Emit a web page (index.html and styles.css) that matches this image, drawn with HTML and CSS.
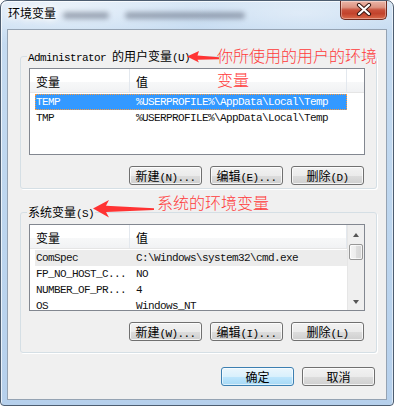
FILE: index.html
```html
<!DOCTYPE html>
<html lang="zh-CN">
<head>
<meta charset="utf-8">
<title>环境变量</title>
<link rel="stylesheet" href="styles.css">
</head>
<body>
<div class="window">
  <div class="titlebar">
    <span class="title">环境变量</span>
    <span class="blur b1"></span>
    <span class="blur b2"></span>
    <button class="close" aria-label="关闭">
      <svg width="16" height="13" viewBox="0 0 16 13">
        <path d="M3 2 L13 11 M13 2 L3 11" stroke="#3a1a14" stroke-width="4.2" stroke-linecap="round"/>
        <path d="M3 2 L13 11 M13 2 L3 11" stroke="#ffffff" stroke-width="2.2" stroke-linecap="round"/>
      </svg>
    </button>
  </div>
  <div class="client">
    <fieldset class="group g1">
      <legend><span class="m">Administrator </span>的用户变量<span class="m">(U)</span></legend>
      <div class="list">
        <div class="lmain">
          <div class="lhead"><span class="hc c1">变量</span><span class="hc c2">值</span><span class="hc c3"></span></div>
          <div class="rows m">
            <div class="row sel"><span class="n">TEMP</span><span class="v">%USERPROFILE%\AppData\Local\Temp</span></div>
            <div class="row"><span class="n">TMP</span><span class="v">%USERPROFILE%\AppData\Local\Temp</span></div>
          </div>
        </div>
      </div>
      <div class="btns">
        <button class="btn">新建<span class="m">(N)...</span></button>
        <button class="btn">编辑<span class="m">(E)...</span></button>
        <button class="btn">删除<span class="m">(D)</span></button>
      </div>
    </fieldset>

    <fieldset class="group g2">
      <legend>系统变量<span class="m">(S)</span></legend>
      <div class="list">
        <div class="lmain">
          <div class="lhead"><span class="hc c1">变量</span><span class="hc c2 last">值</span></div>
          <div class="rows m">
            <div class="row hov"><span class="n">ComSpec</span><span class="v">C:\Windows\system32\cmd.exe</span></div>
            <div class="row"><span class="n">FP_NO_HOST_C...</span><span class="v">NO</span></div>
            <div class="row"><span class="n">NUMBER_OF_PR...</span><span class="v">4</span></div>
            <div class="row"><span class="n">OS</span><span class="v">Windows_NT</span></div>
          </div>
        </div>
        <div class="sbar">
          <div class="sb-btn"><span class="tri up"></span></div>
          <div class="thumb"></div>
          <div class="track"></div>
          <div class="sb-btn"><span class="tri down"></span></div>
        </div>
      </div>
      <div class="btns">
        <button class="btn">新建<span class="m">(W)...</span></button>
        <button class="btn">编辑<span class="m">(I)...</span></button>
        <button class="btn">删除<span class="m">(L)</span></button>
      </div>
    </fieldset>

    <div class="footer">
      <button class="btn default">确定</button>
      <button class="btn">取消</button>
    </div>
  </div>

  <svg class="arrows" width="394" height="406" viewBox="0 0 394 406" aria-hidden="true">
    <polygon points="187,56.5 199,51 197.5,55.5 219,57.2 219,59.2 197.5,59.8 199,62.5" fill="#ff3333"/>
    <polygon points="93,208.5 109,200 106,205.8 154,208.2 154,210 106,212 109,217.5" fill="#ff3333"/>
  </svg>
  <div class="note n1">你所使用的用户的环境<br>变量</div>
  <div class="note n2">系统的环境变量</div>
</div>
</body>
</html>
```

FILE: styles.css
```css
* { box-sizing: border-box; }
html, body { margin: 0; padding: 0; }
body {
  width: 394px;
  height: 406px;
  overflow: hidden;
  background: #ffffff;
  font-family: "Noto Sans CJK SC", "Noto Sans CJK JP", sans-serif;
  font-size: 12px;
  color: #000;
}
.m {
  font-family: "Liberation Mono", "Noto Sans CJK SC", monospace;
  font-size: 11px;
  letter-spacing: -0.6px;
}

.window {
  position: relative;
  width: 394px;
  height: 406px;
  border: 1px solid #4d5d70;
  border-radius: 7px 7px 4px 4px;
  background:
    radial-gradient(ellipse 160px 40px at 60px 6px, rgba(255,255,255,0.55), rgba(255,255,255,0)),
    radial-gradient(ellipse 120px 30px at 300px 12px, rgba(255,255,255,0.35), rgba(255,255,255,0)),
    linear-gradient(180deg, #d3e4f5 0%, #c5dbf1 8%, #bcd5ee 60%, #b6d0ec 100%);
  box-shadow: inset 1px 1px 0 rgba(255,255,255,0.7), inset -1px 0 0 rgba(255,255,255,0.5);
  display: flex;
  flex-direction: column;
  overflow: hidden;
}

.titlebar {
  height: 28px;
  flex: none;
  display: flex;
  align-items: flex-start;
  padding: 0 6px 0 7px;
}
.title {
  margin-top: 4px;
  font-size: 12px;
  line-height: 16px;
  color: #000;
  text-shadow: 0 0 5px #ffffff, 0 0 8px #ffffff, 0 0 10px #ffffff;
}
.blur {
  height: 7px;
  margin-top: 11px;
  background: rgba(70, 80, 100, 0.45);
  border-radius: 4px;
  filter: blur(2.5px);
}
.b1 { width: 46px; margin-left: 7px; }
.b2 { width: 120px; margin-left: 16px; }

.close {
  margin-left: auto;
  width: 47px;
  height: 19px;
  padding: 0;
  border: 1px solid #6e2a1f;
  border-top: none;
  border-radius: 0 0 5px 5px;
  background: linear-gradient(180deg, #ecb5a7 0%, #dd9482 35%, #c9503a 50%, #c2432c 70%, #d96a4b 100%);
  box-shadow: inset 0 0 0 1px rgba(255,255,255,0.35);
  display: flex;
  align-items: center;
  justify-content: center;
}
.close svg { display: block; margin-top: -1px; }

.client {
  flex: 1;
  margin: 0 6px 5px;
  background: #f0f0f0;
  border: 1px solid #95a3b3;
  display: flex;
  flex-direction: column;
  padding: 0 9px 0 12px;
}

.group {
  margin: 0;
  min-width: 0;
  border: 1px solid #d5dfe5;
  border-radius: 3px;
  box-shadow: 1px 1px 0 #ffffff;
  padding: 5px 11px 3px 8px;
}
.g1 { margin-top: 19px; }
.g2 { margin-top: 16px; padding-bottom: 11px; }
.group legend {
  margin-left: -2px;
  padding: 0 1px;
  height: 14px;
  line-height: 14px;
  font-size: 12px;
  white-space: pre;
}

.list {
  height: 87px;
  background: #ffffff;
  border: 1px solid #828790;
  display: flex;
  overflow: hidden;
}
.lmain {
  flex: 1;
  min-width: 0;
  display: flex;
  flex-direction: column;
}
.lhead {
  flex: none;
  height: 24px;
  display: flex;
  border-bottom: 1px solid #e5e5e5;
  background: linear-gradient(180deg, #ffffff 0%, #ffffff 55%, #f7f8f9 56%, #f1f2f4 100%);
}
.hc {
  padding: 6px 0 0 6px;
  line-height: 14px;
  border-right: 1px solid #e3e8ee;
}
.c1 { width: 100px; flex: none; }
.c2 { width: 217px; flex: none; }
.c3 { flex: 1; border-right: none; }

.rows {
  padding: 1px 0 0 5px;
  color: #111;
}
.row {
  display: flex;
  width: 312px;
  height: 16px;
  line-height: 16px;
  white-space: pre;
}
.row .n { width: 101px; padding-left: 1px; flex: none; }
.row .v { flex: 1; }
.row.sel {
  background: #3399ff;
  color: #ffffff;
  outline: 1px dotted #ff9a3a;
  outline-offset: -1px;
}
.row.hov { background: #ececec; }

.sbar {
  width: 17px;
  flex: none;
  display: flex;
  flex-direction: column;
  background: #efefef;
  border-left: 1px solid #e6e6e6;
}
.sb-btn {
  height: 18px;
  flex: none;
  display: flex;
  align-items: center;
  justify-content: center;
}
.tri {
  width: 0;
  height: 0;
  border-left: 3.5px solid transparent;
  border-right: 3.5px solid transparent;
}
.tri.up { border-bottom: 4px solid #555; margin-top: 2px; }
.tri.down { border-top: 4px solid #555; margin-bottom: -2px; }
.thumb {
  flex: none;
  height: 16px;
  margin: 1px 1px 0 1px;
  border: 1px solid #979797;
  border-radius: 2px;
  background: linear-gradient(90deg, #f4f4f4 0%, #ececec 50%, #dedede 51%, #d6d6d6 100%);
  box-shadow: inset 0 0 0 1px rgba(255,255,255,0.7);
}
.track { flex: 1; }

.btns {
  display: flex;
  justify-content: flex-end;
  gap: 8px;
  margin-top: 11px;
  padding-right: 1px;
}
.btn {
  width: 73px;
  height: 19px;
  padding: 0;
  border: 1px solid #707070;
  border-radius: 3px;
  background: linear-gradient(180deg, #f2f2f2 0%, #ebebeb 50%, #dddddd 51%, #cfcfcf 100%);
  box-shadow: inset 0 0 0 1px rgba(255,255,255,0.75);
  font-family: "Noto Sans CJK SC", "Noto Sans CJK JP", sans-serif;
  font-size: 12px;
  line-height: 17px;
  color: #000;
  white-space: pre;
}
.btn.default {
  border-color: #3c7fb1;
  background: linear-gradient(180deg, #eaf6fd 0%, #d9f0fc 50%, #bee6fd 51%, #a7d9f5 100%);
  box-shadow: inset 0 0 0 1px rgba(255,255,255,0.6);
}

.footer {
  display: flex;
  justify-content: flex-end;
  gap: 8px;
  margin-top: 14px;
  padding-right: 2px;
}

.arrows {
  position: absolute;
  left: -1px;
  top: -1px;
  pointer-events: none;
}
.note {
  position: absolute;
  color: #ff3b3b;
  font-family: "Noto Sans CJK SC Light", "Noto Sans CJK SC", "Noto Sans CJK JP", sans-serif;
  font-weight: 300;
  font-size: 16px;
  line-height: 24px;
  white-space: nowrap;
}
.n1 { left: 216px; top: 42px; }
.n2 { left: 156px; top: 189px; }
```
